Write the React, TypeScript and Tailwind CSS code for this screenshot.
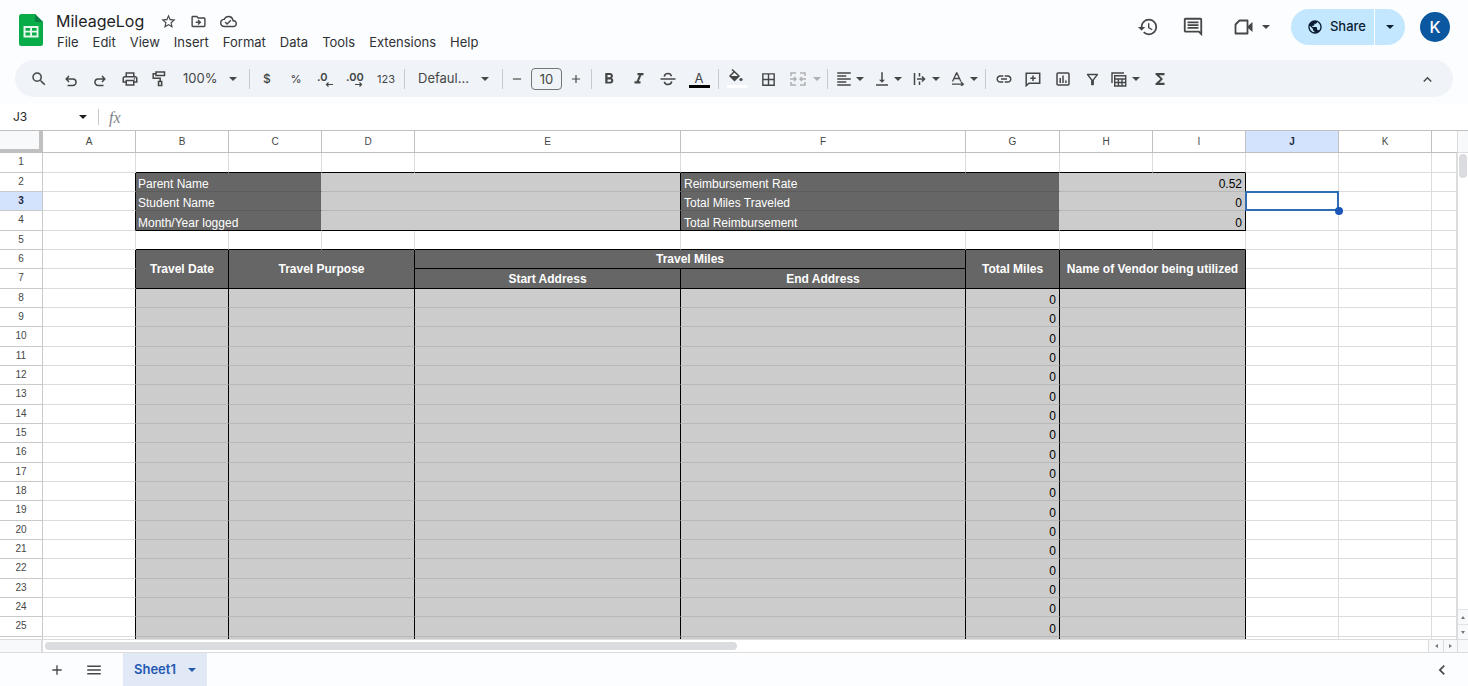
import React from "react";
import {
  MdOutlineStarBorder, MdOutlineDriveFileMove, MdOutlineCloudDone, MdHistory, MdOutlineComment, MdPublic,
  MdSearch, MdOutlinePrint, MdRemove, MdAdd, MdFormatBold, MdFormatItalic, MdBorderAll,
  MdFormatAlignLeft, MdVerticalAlignBottom, MdLink, MdOutlineFilterAlt, MdFunctions, MdKeyboardArrowUp, MdMenu,
  MdChevronLeft,
} from "react-icons/md";

const line = "border-[#dcdcdc]";
const menus = ["File", "Edit", "View", "Insert", "Format", "Data", "Tools", "Extensions", "Help"];
const letters = ["A", "B", "C", "D", "E", "F", "G", "H", "I", "J", "K"];
const summary = [
  { left: "Parent Name", right: "Reimbursement Rate", value: "0.52" },
  { left: "Student Name", right: "Total Miles Traveled", value: "0" },
  { left: "Month/Year logged", right: "Total Reimbursement", value: "0" },
];
const entryRows = Array.from({ length: 18 }, (_, i) => i + 8);

function Tool({ label, className = "w-6 justify-center", children }: { label: string; className?: string; children: React.ReactNode }) {
  return (
    <button type="button" aria-label={label} className={`flex h-7 shrink-0 items-center ${className}`}>
      {children}
    </button>
  );
}

function Divider() {
  return <span className="h-5 w-px shrink-0 bg-[#c7c9cc]" />;
}

function Caret({ className = "" }: { className?: string }) {
  return (
    <svg viewBox="0 0 8 4" className={`h-1 w-2 shrink-0 ${className}`} fill="currentColor">
      <path d="M0 0h8L4 4z" />
    </svg>
  );
}

function Stroke({ className, box, children }: { className: string; box: string; children: React.ReactNode }) {
  return (
    <svg viewBox={box} className={`shrink-0 ${className}`} fill="none" stroke="currentColor" strokeWidth="1.5">
      {children}
    </svg>
  );
}

function Cell({ className = "", children, ...rest }: React.TdHTMLAttributes<HTMLTableCellElement>) {
  return (
    <td {...rest} className={`border-r border-b py-0 ${className}`}>
      {children}
    </td>
  );
}

function Row({ n, children }: { n: number; children: React.ReactNode }) {
  return (
    <tr className={n % 3 === 1 ? "h-[20px]" : "h-[19px]"}>
      <th
        scope="row"
        className={`border-r border-b border-[#c9c9c9] p-0 text-center align-top text-[10px] leading-[18px] ${
          n === 3 ? "bg-[#d3e3fd] font-bold text-[#1f2a44]" : "bg-white font-normal text-[#444746]"
        }`}
      >
        {n}
      </th>
      {children}
    </tr>
  );
}

function Blank({ count }: { count: number }) {
  return (
    <>
      {Array.from({ length: count }, (_, i) => (
        <Cell key={i} className={line} />
      ))}
    </>
  );
}

const darkText = "bg-[#666666] text-center align-middle font-bold text-white border-black";
const entry = "border-r-black border-b-[#b8b8b8] bg-[#cccccc]";

function EntryCells({ value }: { value?: string }) {
  return (
    <>
      <Cell className="border-r-black border-b-[#dcdcdc]" />
      <Cell className={entry} />
      <Cell colSpan={2} className={entry} />
      <Cell className={entry} />
      <Cell className={entry} />
      <Cell className={`${entry} pr-[3px] text-right align-bottom`}>{value}</Cell>
      <Cell colSpan={2} className={entry} />
      <Blank count={3} />
    </>
  );
}

function SheetTable() {
  return (
    <table className="w-full table-fixed border-separate border-spacing-0 font-['Liberation_Sans',Arial,sans-serif] text-xs leading-[14px] text-black">
      <colgroup>
        <col className="w-[43px]" />
        <col className="w-[93px]" />
        <col className="w-[93px]" />
        <col className="w-[93px]" />
        <col className="w-[93px]" />
        <col className="w-[266px]" />
        <col className="w-[285px]" />
        <col className="w-[94px]" />
        <col className="w-[93px]" />
        <col className="w-[93px]" />
        <col className="w-[93px]" />
        <col className="w-[93px]" />
        <col />
      </colgroup>
      <thead>
        <tr className="h-[22px]">
          <td className="border-r-4 border-b-4 border-[#c0c0c0] bg-[#f8f9fa] p-0" />
          {letters.map((c) => (
            <th
              key={c}
              scope="col"
              className={`border-r border-b border-[#c0c0c0] p-0 text-center text-[10px] ${
                c === "J" ? "bg-[#d3e3fd] font-bold text-[#1f2a44]" : "bg-white font-normal text-[#444746]"
              }`}
            >
              {c}
            </th>
          ))}
          <td className="border-b border-[#c0c0c0] p-0" />
        </tr>
      </thead>
      <tbody>
        <Row n={1}>
          <Blank count={1} />
          {letters.slice(1, 9).map((c) => (
            <Cell key={c} className="border-r-[#dcdcdc] border-b-black" />
          ))}
          <Blank count={3} />
        </Row>
        {summary.map((s, i) => {
          const last = i === 2;
          const dark = last ? "border-b-black" : "border-b-[#5c5c5c]";
          const light = last ? "border-b-black" : "border-b-[#b8b8b8]";
          return (
            <Row key={s.left} n={i + 2}>
              <Cell className="border-r-black border-b-[#dcdcdc]" />
              <Cell colSpan={2} className={`border-r-[#cccccc] bg-[#666666] pl-[2px] align-bottom text-white ${dark}`}>
                {s.left}
              </Cell>
              <Cell colSpan={2} className={`border-r-black bg-[#cccccc] ${light}`} />
              <Cell colSpan={2} className={`border-r-[#cccccc] bg-[#666666] pl-[3px] align-bottom text-white ${dark}`}>
                {s.right}
              </Cell>
              <Cell colSpan={2} className={`border-r-black bg-[#cccccc] pr-[3px] text-right align-bottom ${light}`}>
                {s.value}
              </Cell>
              {i === 1 ? (
                <td className="relative border-r border-b border-[#dcdcdc] p-0">
                  <span className="absolute -top-px -right-px -bottom-px -left-px border-2 border-[#2f6db3]" />
                  <span className="absolute -right-[5px] -bottom-[5px] z-10 size-2 rounded-full bg-[#1a56b8]" />
                </td>
              ) : (
                <Blank count={1} />
              )}
              <Blank count={2} />
            </Row>
          );
        })}
        <Row n={5}>
          <Blank count={1} />
          {letters.slice(1, 9).map((c) => (
            <Cell key={c} className="border-r-[#dcdcdc] border-b-black" />
          ))}
          <Blank count={3} />
        </Row>
        <Row n={6}>
          <Cell className="border-r-black border-b-[#dcdcdc]" />
          <Cell rowSpan={2} className={darkText}>Travel Date</Cell>
          <Cell rowSpan={2} colSpan={2} className={darkText}>Travel Purpose</Cell>
          <Cell colSpan={2} className={darkText}>Travel Miles</Cell>
          <Cell rowSpan={2} className={darkText}>Total Miles</Cell>
          <Cell rowSpan={2} colSpan={2} className={`${darkText} whitespace-nowrap`}>Name of Vendor being utilized</Cell>
          <Blank count={3} />
        </Row>
        <Row n={7}>
          <Cell className="border-r-black border-b-[#dcdcdc]" />
          <Cell className={darkText}>Start Address</Cell>
          <Cell className={darkText}>End Address</Cell>
          <Blank count={3} />
        </Row>
        {entryRows.map((n) => (
          <Row key={n} n={n}>
            <EntryCells value="0" />
          </Row>
        ))}
        <tr className="h-[19px]">
          <td className="border-r border-b border-[#c9c9c9] p-0" />
          <EntryCells />
        </tr>
      </tbody>
    </table>
  );
}

function Header() {
  return (
    <header className="flex h-[60px] shrink-0 items-start">
      <svg viewBox="0 0 24 32" className="mt-[14px] ml-[19px] h-8 w-6 shrink-0">
        <path d="M2.500 0H16l8 8v21.500a2.500 2.500 0 0 1-2.500 2.500h-19A2.500 2.500 0 0 1 0 29.500v-27A2.500 2.500 0 0 1 2.500 0z" fill="#08ac48" />
        <path d="M16 0l8 8h-8z" fill="#0b8043" />
        <path d="M4.500 12h15v11.500h-15zM6.500 14v2.700h4.600V14zm6.500 0v2.700h4.600V14zm-6.500 4.600v2.900h4.600v-2.900zm6.500 0v2.900h4.600v-2.900z" fill="#e6f8ec" fillRule="evenodd" />
      </svg>
      <div className="ml-[13px] pt-[10px]">
        <div className="flex h-[22px] items-center text-[#444746]">
          <h1 className="w-[88px] text-base leading-[22px] text-[#1f1f1f]">MileageLog</h1>
          <Tool label="Star" className="ml-[14px] w-5 justify-center"><MdOutlineStarBorder size={17} /></Tool>
          <Tool label="Move" className="ml-[10px] w-5 justify-center"><MdOutlineDriveFileMove size={17} /></Tool>
          <Tool label="Saved to Drive" className="ml-[10px] w-5 justify-center"><MdOutlineCloudDone size={17} /></Tool>
        </div>
        <nav className="flex gap-[14px] pl-px text-[13px] leading-5 text-[#303134]">
          {menus.map((m) => (
            <button key={m} type="button">{m}</button>
          ))}
        </nav>
      </div>
      <div className="ml-auto flex items-center pt-[9px] pr-[18px] text-[#444746]">
        <Tool label="Version history"><MdHistory size={22} /></Tool>
        <Tool label="Comments" className="ml-[21px] w-6 justify-center"><MdOutlineComment size={22} /></Tool>
        <Tool label="Join a call" className="ml-[29px] w-9 justify-between">
          <Stroke box="0 0 20 16" className="h-4 w-5">
            <path d="M5.500 1.500h8v13h-12v-9z" strokeWidth="1.800" strokeLinejoin="round" />
            <path d="M14 7l4.500-4v10L14 9z" fill="currentColor" stroke="none" />
          </Stroke>
          <Caret />
        </Tool>
        <div className="ml-[21px] flex h-9 overflow-hidden rounded-full bg-[#c2e7ff] text-[#0b1d33]">
          <button type="button" className="flex w-[83px] items-center justify-end gap-[7px] pr-2 text-[13px] font-medium">
            <MdPublic size={16} />
            Share
          </button>
          <button type="button" aria-label="Sharing options" className="flex w-[31px] items-center justify-center border-l border-white">
            <Caret />
          </button>
        </div>
        <button type="button" aria-label="Account" className="ml-[15px] size-[30px] rounded-full bg-[#0b57a0] text-base font-medium text-white">K</button>
      </div>
    </header>
  );
}

function Toolbar() {
  return (
    <div role="toolbar" aria-label="Formatting" className="mx-[15px] flex h-[37px] shrink-0 items-center rounded-full bg-[#f0f3f8] pt-px pr-[14px] pl-3 text-[#444746]">
      <Tool label="Search the menus"><MdSearch size={18} /></Tool>
      <Tool label="Undo" className="ml-2 w-6 justify-center">
        <Stroke box="0 0 12 12" className="mt-[3px] size-3"><path d="M4 1L1.200 4 4 7M1.500 4h6.300a3.200 3.200 0 0 1 0 6.500H2.500" /></Stroke>
      </Tool>
      <Tool label="Redo" className="ml-[5px] w-6 justify-center">
        <Stroke box="0 0 12 12" className="mt-[3px] size-3"><path d="M8 1l2.800 3L8 7m2.500-3H4.200a3.200 3.200 0 0 0 0 6.500h5.300" /></Stroke>
      </Tool>
      <Tool label="Print" className="ml-[6px] w-6 justify-center"><MdOutlinePrint size={18} /></Tool>
      <Tool label="Paint format" className="ml-[5px] w-6 justify-center">
        <Stroke box="0 0 14 16" className="h-4 w-[14px]"><path d="M4 1h8.500v3.500H4zM4 2.700H1.200v4.600h7v3M6.500 10.500h3.200v4H6.500z" /></Stroke>
      </Tool>
      <Tool label="Zoom" className="ml-3 w-[54px] justify-between text-[13px]">100%<Caret /></Tool>
      <span className="w-3" />
      <Divider />
      <Tool label="Currency" className="ml-[5px] w-6 justify-center text-xs font-medium">$</Tool>
      <Tool label="Percent" className="ml-[5px] w-6 justify-center text-[11px] font-medium">%</Tool>
      <Tool label="Decrease decimal places" className="ml-[9px] w-4 flex-col justify-center">
        <span className="self-start text-[11px] leading-3 font-semibold">.0</span>
        <Stroke box="0 0 8 5" className="-mt-px h-[5px] w-2 self-end"><path d="M8 2.500H1.500M3.500.5l-2 2 2 2" strokeWidth="1.200" /></Stroke>
      </Tool>
      <Tool label="Increase decimal places" className="ml-[13px] w-[17px] flex-col justify-center">
        <span className="self-start text-[11px] leading-3 font-semibold">.00</span>
        <Stroke box="0 0 8 5" className="-mt-px h-[5px] w-2 self-end"><path d="M0 2.500h6.500M4.500.5l2 2-2 2" strokeWidth="1.200" /></Stroke>
      </Tool>
      <Tool label="More formats" className="ml-[11px] w-6 justify-center text-[11px]">123</Tool>
      <span className="w-[6px]" />
      <Divider />
      <Tool label="Font" className="ml-[13px] w-[71px] justify-between text-[13px]">Defaul...<Caret /></Tool>
      <span className="w-[13px]" />
      <Divider />
      <Tool label="Decrease font size" className="ml-[6px] w-4 justify-center"><MdRemove size={14} /></Tool>
      <input aria-label="Font size" defaultValue="10" className="mx-[6px] h-[22px] w-[31px] rounded border border-[#747775] bg-transparent text-center text-[13px]" />
      <Tool label="Increase font size" className="w-4 justify-center"><MdAdd size={14} /></Tool>
      <span className="w-[7px]" />
      <Divider />
      <Tool label="Bold" className="ml-[5px] w-6 justify-center"><MdFormatBold size={18} /></Tool>
      <Tool label="Italic" className="ml-[6px] w-6 justify-center"><MdFormatItalic size={18} /></Tool>
      <Tool label="Strikethrough" className="ml-[5px] w-6 justify-center">
        <Stroke box="0 0 16 14" className="h-[14px] w-4"><path d="M.5 7h15M11.500 4.300C11 2.300 9.800 1.500 8 1.500S4.500 2.500 4.300 4.600M4.300 9.700c.5 2 1.900 2.800 3.700 2.800s3.500-1 3.700-3.100" /></Stroke>
      </Tool>
      <Tool label="Text color" className="ml-[7px] w-6 flex-col justify-center">
        <span className="text-[13px] leading-[14px]">A</span>
        <span className="h-[3px] w-[21px] bg-black" />
      </Tool>
      <span className="w-[7px]" />
      <Divider />
      <Tool label="Fill color" className="ml-[6px] w-6 justify-center">
        <svg viewBox="0 0 20 20" className="size-5">
          <path d="M5 .5l7 6.500-4.500 4.500L3 7l4-4" fill="none" stroke="currentColor" strokeWidth="1.500" />
          <path d="M3 7h9l-4.500 4.500z" fill="currentColor" />
          <circle cx="14" cy="10.500" r="1.600" fill="currentColor" />
          <path d="M0 16h20v3H0z" fill="#fff" />
        </svg>
      </Tool>
      <Tool label="Borders" className="ml-[7px] w-6 justify-center"><MdBorderAll size={17} /></Tool>
      <Tool label="Merge cells" className="ml-[10px] w-[31px] justify-between text-[#aeb0b3]">
        <Stroke box="0 0 16 14" className="h-[14px] w-4"><path d="M6 1H1v3m9-3h5v3M6 13H1v-3m9 3h5v-3M0 7h6M4 5l2 2-2 2M16 7h-6m2-2l-2 2 2 2" /></Stroke>
        <Caret />
      </Tool>
      <span className="w-[6px]" />
      <Divider />
      <Tool label="Horizontal align" className="ml-[7px] w-[29px] justify-between"><MdFormatAlignLeft size={18} /><Caret /></Tool>
      <Tool label="Vertical align" className="ml-[9px] w-[29px] justify-between"><MdVerticalAlignBottom size={18} /><Caret /></Tool>
      <Tool label="Text wrapping" className="ml-[11px] w-[27px] justify-between">
        <Stroke box="0 0 13 14" className="h-[14px] w-[13px]"><path d="M1.500 1v12M6.500 1v3.500M6.500 9.500V13M4 7h7.500M9 4.500L11.500 7 9 9.500" /></Stroke>
        <Caret />
      </Tool>
      <Tool label="Text rotation" className="ml-[11px] w-[27px] justify-between">
        <Stroke box="0 0 14 14" className="h-[14px] w-[14px]"><path d="M1.500 9.500L5.500 1h.4l4 8.500M3 6.500h5.500M1 12.200h11M10 10l2.300 2.200L10 14" strokeWidth="1.300" /></Stroke>
        <Caret />
      </Tool>
      <span className="w-[7px]" />
      <Divider />
      <Tool label="Insert link" className="ml-[6px] w-6 justify-center"><MdLink size={18} /></Tool>
      <Tool label="Insert comment" className="ml-[5px] w-6 justify-center">
        <Stroke box="0 0 16 15" className="h-[15px] w-4"><path d="M1.200 1.200h13.500v10H4l-2.800 2.500zM8 3.500v5.400M5.300 6.200h5.400" /></Stroke>
      </Tool>
      <Tool label="Insert chart" className="ml-[6px] w-6 justify-center">
        <Stroke box="0 0 14 14" className="size-[14px]"><rect x="1" y="1" width="12" height="12" rx="1" /><path d="M4.200 6v5M7 3.500V11M9.900 8.500V11" /></Stroke>
      </Tool>
      <Tool label="Create a filter" className="ml-[5px] w-6 justify-center"><MdOutlineFilterAlt size={17} /></Tool>
      <Tool label="Filter views" className="ml-[7px] w-[29px] justify-between">
        <Stroke box="0 0 16 15" className="h-[15px] w-4"><path d="M1 11V1h12M3.700 3.700h11v10.300h-11zM3.700 7h11M3.700 10.500h11M7.400 7v7M11 7v7" strokeWidth="1.400" /></Stroke>
        <Caret />
      </Tool>
      <Tool label="Functions" className="ml-2 w-6 justify-center"><MdFunctions size={18} /></Tool>
      <Tool label="Hide the menus" className="ml-auto w-6 justify-center"><MdKeyboardArrowUp size={17} /></Tool>
    </div>
  );
}

function FormulaBar() {
  return (
    <div className="mt-[7px] flex h-[26px] shrink-0 items-center bg-white text-[#444746]">
      <button type="button" aria-label="Name box" className="flex w-[87px] items-center justify-between pl-[13px] text-xs text-[#1f1f1f]">
        J3<Caret />
      </button>
      <span className="ml-[11px] h-4 w-px bg-[#c7c9cc]" />
      <span className="ml-[10px] pt-px font-['Liberation_Serif',serif] text-base leading-5 text-[#80848a] italic">fx</span>
      <input aria-label="Formula" className="ml-3 min-w-0 flex-1 bg-transparent text-xs outline-none" />
    </div>
  );
}

const scrollButton = "flex shrink-0 items-center justify-center bg-[#f8f9fa] text-[#777777]";

function VerticalScroll() {
  return (
    <div className="flex w-[11px] shrink-0 flex-col items-center border-l border-[#dcdcdc]">
      <div className="h-[22px] w-full shrink-0 border-b border-[#dcdcdc] bg-[#f8f9fa]" />
      <div className="mt-px h-6 w-2 rounded-full bg-[#dadce0]" />
      <button type="button" aria-label="Scroll up" className={`${scrollButton} mt-auto h-[15px] w-full border-t border-[#e3e3e3]`}>
        <svg viewBox="0 0 4 3" className="h-[3px] w-1" fill="currentColor"><path d="M0 3h4L2 0z" /></svg>
      </button>
      <button type="button" aria-label="Scroll down" className={`${scrollButton} h-[15px] w-full border-t border-[#e3e3e3]`}>
        <svg viewBox="0 0 4 3" className="h-[3px] w-1" fill="currentColor"><path d="M0 0h4L2 3z" /></svg>
      </button>
    </div>
  );
}

function HorizontalScroll() {
  return (
    <div className="flex h-[13px] shrink-0 border-t border-[#dcdcdc]">
      <div className="w-[43px] shrink-0 border-r-2 border-[#dcdcdc] bg-[#f8f9fa]" />
      <div className="flex flex-1 items-center pl-[2px]">
        <div className="h-2 w-1/2 rounded-full bg-[#dadce0]" />
      </div>
      <button type="button" aria-label="Scroll left" className={`${scrollButton} w-[15px] border-l border-[#dcdcdc]`}>
        <svg viewBox="0 0 3 4" className="h-1 w-[3px]" fill="currentColor"><path d="M3 0v4L0 2z" /></svg>
      </button>
      <button type="button" aria-label="Scroll right" className={`${scrollButton} w-[14px] border-l border-[#dcdcdc]`}>
        <svg viewBox="0 0 3 4" className="h-1 w-[3px]" fill="currentColor"><path d="M0 0v4l3-2z" /></svg>
      </button>
      <div className="w-[11px] shrink-0 border-l border-[#dcdcdc] bg-[#f8f9fa]" />
    </div>
  );
}

function SheetTabs() {
  return (
    <footer className="flex h-[34px] shrink-0 items-center border-t border-[#dcdcdc] text-[#444746]">
      <Tool label="Add sheet" className="ml-[45px] w-6 justify-center"><MdAdd size={16} /></Tool>
      <Tool label="All sheets" className="ml-[13px] w-6 justify-center"><MdMenu size={18} /></Tool>
      <button type="button" className="ml-[17px] flex h-full w-[84px] items-center justify-between bg-[#e1e9f7] px-[11px] pt-px text-[13px] font-semibold text-[#2458b3]">
        Sheet1<Caret />
      </button>
      <Tool label="Show side panel" className="mr-[14px] ml-auto w-6 justify-center"><MdChevronLeft size={20} /></Tool>
    </footer>
  );
}

export default function App() {
  return (
    <div className="flex h-screen flex-col overflow-hidden bg-[#fbfdff] font-[Inter,sans-serif] text-[#1f1f1f]">
      <Header />
      <Toolbar />
      <FormulaBar />
      <main className="flex min-h-0 flex-1 flex-col border-t border-[#c0c0c0] bg-white">
        <div className="flex min-h-0 flex-1">
          <div className="min-w-0 flex-1 overflow-hidden"><SheetTable /></div>
          <VerticalScroll />
        </div>
        <HorizontalScroll />
      </main>
      <SheetTabs />
    </div>
  );
}
